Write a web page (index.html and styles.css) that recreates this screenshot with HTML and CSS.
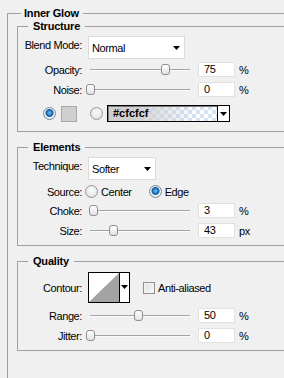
FILE: index.html
```html
<!DOCTYPE html>
<html>
<head>
<meta charset="utf-8">
<title>Inner Glow</title>
<link rel="stylesheet" href="styles.css">
</head>
<body>
<fieldset class="panel">
  <legend class="panel-title">Inner Glow</legend>

  <fieldset class="group group-structure">
    <legend class="group-title">Structure</legend>
    <div class="row row-select">
      <span class="label label-top">Blend Mode:</span>
      <div class="select select-blend"><span class="select-text">Normal</span><svg class="arrow" width="7" height="4" viewBox="0 0 7 4"><path d="M0 0H7L3.5 4Z"/></svg></div>
    </div>
    <div class="row row-slider row-opacity">
      <span class="label">Opacity:</span>
      <div class="slider"><div class="track"></div><div class="thumb" style="left:75%"></div></div>
      <span class="field">75</span><span class="unit">%</span>
    </div>
    <div class="row row-slider">
      <span class="label">Noise:</span>
      <div class="slider"><div class="track"></div><div class="thumb" style="left:0%"></div></div>
      <span class="field">0</span><span class="unit">%</span>
    </div>
    <div class="row row-color">
      <span class="radio checked"></span>
      <span class="swatch"></span>
      <span class="radio radio-gradient"></span>
      <div class="color-field"><span class="color-text">#cfcfcf</span><span class="color-drop"><svg class="arrow" width="7" height="4" viewBox="0 0 7 4"><path d="M0 0H7L3.5 4Z"/></svg></span></div>
    </div>
  </fieldset>

  <fieldset class="group group-elements">
    <legend class="group-title">Elements</legend>
    <div class="row row-select">
      <span class="label label-top">Technique:</span>
      <div class="select select-tech"><span class="select-text">Softer</span><svg class="arrow" width="7" height="4" viewBox="0 0 7 4"><path d="M0 0H7L3.5 4Z"/></svg></div>
    </div>
    <div class="row row-source">
      <span class="label">Source:</span>
      <span class="radio radio-source"></span><span class="radio-label">Center</span>
      <span class="radio checked radio-edge"></span><span class="radio-label">Edge</span>
    </div>
    <div class="row row-slider">
      <span class="label">Choke:</span>
      <div class="slider"><div class="track"></div><div class="thumb" style="left:3%"></div></div>
      <span class="field">3</span><span class="unit">%</span>
    </div>
    <div class="row row-slider">
      <span class="label">Size:</span>
      <div class="slider"><div class="track"></div><div class="thumb" style="left:23%"></div></div>
      <span class="field">43</span><span class="unit">px</span>
    </div>
  </fieldset>

  <fieldset class="group group-quality">
    <legend class="group-title">Quality</legend>
    <div class="row row-contour">
      <span class="label">Contour:</span>
      <div class="contour">
        <svg class="contour-curve" width="30" height="29" viewBox="0 0 30 29"><rect width="30" height="29" fill="#fff"/><path d="M0 29L30 0V29Z" fill="#a3a3a3"/></svg>
        <span class="contour-drop"><svg class="arrow" width="7" height="4" viewBox="0 0 7 4"><path d="M0 0H7L3.5 4Z"/></svg></span>
      </div>
      <span class="checkbox"></span><span class="check-label">Anti-aliased</span>
    </div>
    <div class="row row-slider">
      <span class="label">Range:</span>
      <div class="slider"><div class="track"></div><div class="thumb" style="left:48%"></div></div>
      <span class="field">50</span><span class="unit">%</span>
    </div>
    <div class="row row-slider">
      <span class="label">Jitter:</span>
      <div class="slider"><div class="track"></div><div class="thumb" style="left:0%"></div></div>
      <span class="field">0</span><span class="unit">%</span>
    </div>
  </fieldset>
</fieldset>
</body>
</html>
```

FILE: styles.css
```css
html, body {
  margin: 0;
  padding: 0;
}
body {
  background: #f0f0f0;
  font: 11px/12px "Liberation Sans", Arial, sans-serif;
  letter-spacing: -0.4px;
  color: #000;
  width: 284px;
  height: 378px;
  overflow: hidden;
}

.panel {
  margin: 7px 0 0 7px;
  padding: 1px 0 60px 9px;
  border: 1px solid #a0a0a0;
  border-right: 0;
  width: 420px;
  min-width: 0;
}
.panel-title {
  margin-left: 4px;
  padding: 0 4px 0 3px;
  font-weight: bold;
  line-height: 12px;
  letter-spacing: -0.2px;
}

.group {
  margin: 0;
  padding: 4px 0 9px 0;
  border: 1px solid #a0a0a0;
  border-right: 0;
  min-width: 0;
}
.group + .group { margin-top: 9px; }
.group-elements { padding-bottom: 7px; }
.group-quality { padding-top: 5px; padding-bottom: 7px; }
.group-title {
  margin-left: 10px;
  padding: 0 5px;
  font-weight: bold;
  line-height: 12px;
  letter-spacing: -0.2px;
}

.row {
  display: flex;
  align-items: center;
}
.row + .row { margin-top: 5px; }
.row-opacity { margin-top: 3px !important; }
.row-color { margin-top: 8px !important; }

.label {
  flex: none;
  width: 64px;
  text-align: right;
  margin-right: 6px;
}
.row-select { align-items: flex-start; }
.label-top { padding-top: 3px; }

.select {
  position: relative;
  height: 21px;
  background: #fff;
  border: 1px solid #dadada;
  display: flex;
  align-items: center;
}
.select-blend { width: 95px; }
.select-tech { width: 66px; }
.select-text { padding-left: 3px; flex: 1; }
.select .arrow { margin-right: 4px; }
.arrow { display: block; fill: #000; }

.row-slider { height: 15px; }
.slider {
  position: relative;
  width: 100px;
  height: 15px;
  margin: 0 8px 0 2px;
  display: flex;
  align-items: center;
}
.track {
  width: 100%;
  height: 1px;
  background: #a3a3a3;
  border-bottom: 1px solid #fbfbfb;
}
.thumb {
  position: absolute;
  top: 2px;
  width: 7px;
  height: 9px;
  margin-left: -4px;
  border: 1px solid #8e8e8e;
  border-radius: 3px;
  background: linear-gradient(#ffffff, #e2e2e2);
}
.field {
  box-sizing: border-box;
  width: 37px;
  height: 15px;
  padding-left: 5px;
  background: #fff;
  border: 1px solid #e1e1e1;
  line-height: 13px;
}
.unit { margin-left: 4px; }

.radio {
  box-sizing: border-box;
  flex: none;
  width: 13px;
  height: 13px;
  border-radius: 50%;
  border: 1px solid #979797;
  background: radial-gradient(circle at 50% 40%, #fdfdfd 0, #e4e4e4 70%, #d0d0d0 100%);
}
.radio.checked {
  border-color: #7a8a99;
  background: radial-gradient(circle at 50% 45%, #7fc4f5 0, #2e86d2 2px, #135a9e 3.5px, #f2f2f2 4.5px, #dcdcdc 100%);
}

.row-color { height: 17px; padding-left: 25px; }
.swatch {
  box-sizing: border-box;
  width: 16px;
  height: 16px;
  margin-left: 5px;
  background: #cfcfcf;
  border: 1px solid #a8a8a8;
}
.radio-gradient { margin-left: 13px; }
.color-field {
  box-sizing: border-box;
  width: 123px;
  height: 17px;
  margin-left: 4px;
  border: 1px solid #000;
  display: flex;
  background:
    linear-gradient(to right, #cfcfcf 0, #cfcfcf 22%, rgba(207,207,207,0.55) 45%, rgba(207,207,207,0) 75%),
    repeating-conic-gradient(#d3e2f6 0 25%, #ffffff 0 50%) 0 0 / 8px 8px;
  box-shadow: inset 1px 1px 0 #7a7a7a;
}
.color-text {
  flex: 1;
  padding-left: 5px;
  font-weight: bold;
  letter-spacing: 0;
  line-height: 15px;
}
.color-drop {
  width: 11px;
  background: #fff;
  border-left: 1px solid #000;
  display: flex;
  align-items: center;
  justify-content: center;
}

.row-source { height: 13px; }
.radio-source { margin-left: -3px; }
.radio-label { margin-left: 3px; }
.radio-edge { margin-left: 17px; }

.row-contour { height: 31px; }
.contour {
  box-sizing: border-box;
  width: 42px;
  height: 31px;
  border: 1px solid #000;
  display: flex;
  background: #fff;
}
.contour-curve { display: block; }
.contour-drop {
  flex: 1;
  border-left: 1px solid #000;
  display: flex;
  justify-content: center;
  padding-top: 12px;
}
.checkbox {
  box-sizing: border-box;
  width: 12px;
  height: 12px;
  margin-left: 13px;
  border: 1px solid #8f8f8f;
  background: linear-gradient(135deg, #dedede, #fbfbfb);
  box-shadow: inset 0 0 0 1px #f4f4f4;
}
.check-label { margin-left: 3px; }
```
